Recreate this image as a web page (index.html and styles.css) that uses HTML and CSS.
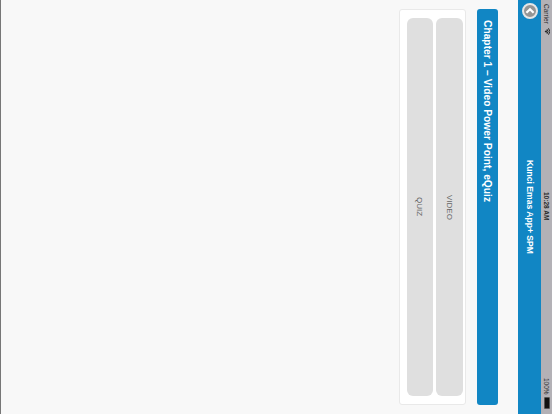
FILE: index.html
```html
<!DOCTYPE html>
<html lang="en">
<head>
<meta charset="utf-8">
<title>Kunci Emas App+ SPM</title>
<link rel="stylesheet" href="styles.css">
</head>
<body>
<div class="statusbar">
  <div class="status-left">
    <span>Carrier</span>
    <svg class="wifi" width="6" height="7" viewBox="0 0 6 7"><path d="M0.6 3.5 L2.4 2 A2.4 2.4 0 0 1 2.4 5 Z" fill="#222"/><path d="M3 1.2 A3.4 3.4 0 0 1 3 5.8" fill="none" stroke="#222" stroke-width="1"/><path d="M4.5 0.3 A5 5 0 0 1 4.5 6.7" fill="none" stroke="#222" stroke-width="1"/></svg>
  </div>
  <div class="status-time">10:28 AM</div>
  <div class="status-right">
    <span>100%</span>
    <span class="battery"></span>
  </div>
</div>
<header class="header">
  <div class="header-side">
    <span class="back">
      <svg width="12" height="12" viewBox="0 0 12 12"><path d="M2.4 7.8 L6 4.2 L9.6 7.8" fill="none" stroke="#fff" stroke-width="2.2"/></svg>
    </span>
  </div>
  <h1 class="header-title">Kunci Emas App+ SPM</h1>
  <div class="header-side"></div>
</header>
<main class="content">
  <h2 class="chapter">Chapter 1 – Video Power Point, eQuiz</h2>
  <section class="card">
    <a class="btn">VIDEO</a>
    <a class="btn">QUIZ</a>
  </section>
</main>
</body>
</html>
```
FILE: styles.css
```css
html, body {
  margin: 0;
  padding: 0;
}
html {
  width: 552px;
  height: 414px;
  overflow: hidden;
}
body {
  box-sizing: border-box;
  width: 552px;
  height: 414px;
  overflow: hidden;
  writing-mode: vertical-rl;
  background: #f8f8f8;
  border-left: 1px solid #777;
  font-family: "Liberation Sans", Arial, sans-serif;
  display: flex;
  flex-direction: column;
}
.statusbar {
  display: grid;
  grid-template-columns: 1fr auto 1fr;
  align-items: center;
  block-size: 11px;
  flex: none;
  padding-inline: 4px 5.5px;
  box-sizing: border-box;
  background: #b3b1b6;
  color: #2a2a2a;
  font-size: 6.5px;
}
.status-left {
  display: flex;
  align-items: center;
  gap: 4px;
}
.status-time {
  font-weight: bold;
}
.status-right {
  display: flex;
  justify-content: flex-end;
  align-items: center;
  gap: 2px;
}
.wifi {
  display: block;
}
.battery {
  display: block;
  box-sizing: border-box;
  inline-size: 12px;
  block-size: 6px;
  background: #111;
  border: 0.5px solid #555;
  border-radius: 1px;
}
.header {
  display: grid;
  grid-template-columns: 1fr auto 1fr;
  align-items: center;
  block-size: 23px;
  flex: none;
  background: #1186c4;
  color: #fff;
}
.header-side {
  display: flex;
  align-items: center;
  padding-inline-start: 3px;
}
.back {
  display: flex;
  align-items: center;
  justify-content: center;
  box-sizing: border-box;
  width: 16px;
  height: 16px;
  border-radius: 50%;
  background: #959595;
  border: 2px solid #e6e6e6;
}
.header-title {
  margin: 0;
  font-size: 8.6px;
  font-weight: bold;
}
.content {
  flex: 1;
  padding-block-start: 20px;
  padding-inline: 9px;
  display: flex;
  flex-direction: column;
  gap: 11px;
}
.chapter {
  margin: 0;
  block-size: 21px;
  box-sizing: border-box;
  padding-inline: 11px;
  display: flex;
  align-items: center;
  background: #1186c4;
  color: #fff;
  border-radius: 3px;
  font-size: 10.25px;
  font-weight: bold;
}
.card {
  display: flex;
  flex-direction: column;
  gap: 3px;
  box-sizing: border-box;
  block-size: 67px;
  padding-block: 2px 6.5px;
  padding-inline: 8px;
  background: #fff;
  border: 1px solid #e9e9e9;
  border-radius: 3px;
}
.btn {
  display: flex;
  align-items: center;
  justify-content: center;
  block-size: 27px;
  background: #dfdfdf;
  color: #666;
  border-radius: 6px;
  font-size: 8px;
}
```
